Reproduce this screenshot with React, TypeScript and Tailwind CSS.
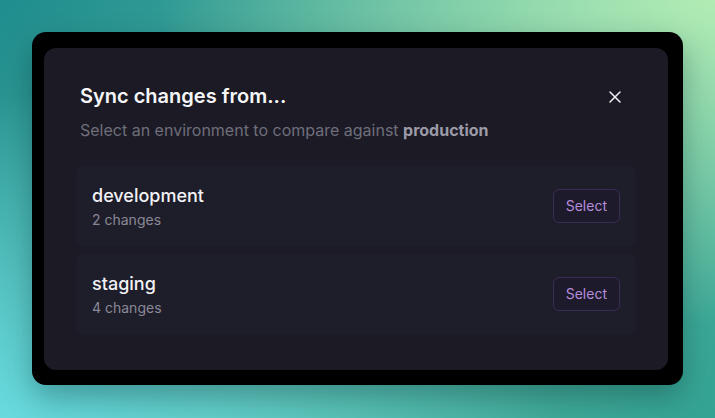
import { X } from 'lucide-react';

const environments = [
  { name: 'development', changes: 2 },
  { name: 'staging', changes: 4 },
];

export default function App() {
  return (
    <div
      className="w-[715px] h-[418px] overflow-hidden pl-8 pt-8 bg-[radial-gradient(at_100%_0%,#b2ecb4_0,transparent_55%),radial-gradient(at_0%_100%,#68dbe0_0,transparent_55%),linear-gradient(135deg,#1f8d8e,#5ab9a3_55%,#33a394)]"
      style={{ fontFamily: 'Inter, "Noto Sans", sans-serif' }}
    >
      {/* Outer frame */}
      <div className="w-[651px] rounded-[14px] bg-black pl-3 pr-[15px] pt-4 pb-[15px] shadow-[0_12px_30px_rgba(0,40,40,0.35)]">
        {/* Dialog */}
        <div className="rounded-xl bg-[#1b1a25] px-8 pt-[34px] pb-9">
          <div className="flex items-start justify-between px-1">
            <h2 className="text-[20px] leading-7 font-semibold text-[#f6f6f8]">Sync changes from...</h2>
            <button className="mt-[5px] mr-[7px] flex h-5 w-5 items-center justify-center text-[#f0f0f2]">
              <X size={20} strokeWidth={1.8} />
            </button>
          </div>
          <p className="mt-2 px-1 text-base leading-6 text-[#6f6e7b]">
            Select an environment to compare against <span className="font-bold text-[#9c9ba7]">production</span>
          </p>

          <div className="mt-6 flex flex-col gap-2">
            {environments.map((env) => (
              <div key={env.name} className="flex items-center justify-between rounded-lg bg-[#1e1d2a] px-4 py-4">
                <div>
                  <div className="text-[18px] leading-7 font-medium text-[#f2f2f5]">{env.name}</div>
                  <div className="text-sm leading-5 text-[#8a8996]">{env.changes} changes</div>
                </div>
                <button className="rounded-md border border-[#3a2c55] bg-[#1d1a2b] px-3 py-1.5 text-sm leading-5 text-[#b48cda]">
                  Select
                </button>
              </div>
            ))}
          </div>
        </div>
      </div>
    </div>
  );
}
